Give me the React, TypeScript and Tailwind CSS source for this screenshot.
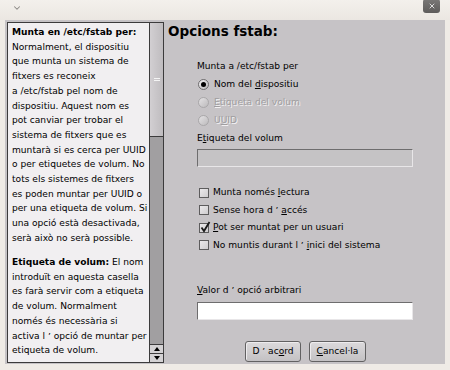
import { ChevronDown, X } from 'lucide-react';

const helpLines: { text: React.ReactNode; gap?: boolean }[] = [
  { text: <b>Munta en /etc/fstab per:</b> },
  { text: 'Normalment, el dispositiu' },
  { text: 'que munta un sistema de' },
  { text: 'fitxers es reconeix' },
  { text: 'a /etc/fstab pel nom de' },
  { text: 'dispositiu. Aquest nom es' },
  { text: 'pot canviar per trobar el' },
  { text: 'sistema de fitxers que es' },
  { text: 'muntarà si es cerca per UUID' },
  { text: 'o per etiquetes de volum. No' },
  { text: 'tots els sistemes de fitxers' },
  { text: 'es poden muntar per UUID o' },
  { text: 'per una etiqueta de volum. Si' },
  { text: 'una opció està desactivada,' },
  { text: 'serà això no serà possible.' },
  { text: <><b>Etiqueta de volum:</b> El nom</>, gap: true },
  { text: 'introduït en aquesta casella' },
  { text: 'es farà servir com a etiqueta' },
  { text: 'de volum. Normalment' },
  { text: 'només és necessària si' },
  { text: 'activa l ʼ opció de muntar per' },
  { text: 'etiqueta de volum.' },
];

function Radio({ checked, disabled, children }: { checked?: boolean; disabled?: boolean; children: React.ReactNode }) {
  return (
    <div className="h-[18px] flex items-center pl-[34px]">
      <span
        className={`w-[11px] h-[11px] rounded-full border flex items-center justify-center ${
          disabled
            ? 'border-[#a9a7a9] bg-gradient-to-br from-[#e4e2e4] to-[#bdbbbd]'
            : 'border-[#6f6d6f] bg-gradient-to-br from-[#f4f3f4] to-[#b9b7b9]'
        }`}
      >
        {checked && <span className="w-[5px] h-[5px] rounded-full bg-black" />}
      </span>
      <span
        className={`ml-[5px] ${disabled ? 'text-[#a09ea0] [text-shadow:1px_1px_0_#f2f0f2]' : 'text-black'}`}
      >
        {children}
      </span>
    </div>
  );
}

function Check({ checked, children }: { checked?: boolean; children: React.ReactNode }) {
  return (
    <div className="h-[17.5px] flex items-center pl-[35px]">
      <span className="relative w-[10px] h-[10px] border border-[#5d5c5d] bg-gradient-to-br from-[#ebe9eb] to-[#cfcdcf]">
        {checked && (
          <svg className="absolute left-[0px] top-[-3px]" width="11" height="12" viewBox="0 0 11 12">
            <path d="M1.5 6.5 L4 10 L9.5 1" fill="none" stroke="#1a1a1a" strokeWidth="1.8" />
          </svg>
        )}
      </span>
      <span className="ml-[4px]">{children}</span>
    </div>
  );
}

function Button({ children, w }: { children: React.ReactNode; w: string }) {
  return (
    <div className={`${w} h-[21px] rounded-[3px] border border-[#626162] bg-gradient-to-b from-[#dcdadc] to-[#c3c1c3] flex items-center justify-center shadow-[inset_1px_1px_0_#eeecee]`}>
      {children}
    </div>
  );
}

export default function App() {
  return (
    <div className="w-[450px] h-[370px] bg-[#efebe6] flex flex-col overflow-hidden text-black text-[9.1px] leading-[14.7px] font-['DejaVu_Sans',sans-serif]">
      {/* Title bar */}
      <div className="h-[20px] flex items-start justify-between bg-gradient-to-b from-[#f3f0ec] to-[#ebe7e2]">
        <ChevronDown className="w-[10px] h-[10px] text-[#8a8784] ml-[12px] mt-[3px]" strokeWidth={2.5} />
        <div className="w-[17px] h-[14px] mr-[10px] -mt-[1px] rounded-[3px] bg-gradient-to-b from-[#7a7877] to-[#5e5c5b] flex items-center justify-center">
          <X className="w-[8px] h-[8px] text-[#dcdcdc]" strokeWidth={3} />
        </div>
      </div>

      {/* Body */}
      <div className="mx-[5px] h-[344px] bg-[#c6c3c6] flex">
        {/* Help panel */}
        <div className="ml-[2px] mt-[2px] w-[157px] h-[341px] border border-[#3c3b3c] flex">
          <div className="w-[141px] bg-[#f1eff1] pl-[4px] pt-[2px] whitespace-nowrap">
            {helpLines.map((l, i) => (
              <div key={i} className={l.gap ? 'mt-[9.5px]' : ''}>
                {l.text}
              </div>
            ))}
          </div>
          <div className="w-[14px] border-l border-[#3c3b3c] flex flex-col">
            <div className="h-[114px] bg-gradient-to-r from-[#d2cfd2] to-[#bfbcbf] border-b border-[#3c3b3c] flex items-center justify-center">
              <div className="w-[6px] flex flex-col gap-[1px]">
                <div className="h-[1px] bg-[#f4f4f4]" />
                <div className="h-[1px] bg-[#f4f4f4]" />
              </div>
            </div>
            <div className="flex-1 bg-[#a19fa1]" />
            <div className="h-[9px] border-t border-[#3c3b3c] bg-[#d4d2d4] flex items-center justify-center">
              <div className="w-0 h-0 border-l-[3px] border-r-[3px] border-b-[4px] border-l-transparent border-r-transparent border-b-black" />
            </div>
            <div className="h-[9px] border-t border-[#3c3b3c] bg-[#d4d2d4] flex items-center justify-center">
              <div className="w-0 h-0 border-l-[3px] border-r-[3px] border-t-[4px] border-l-transparent border-r-transparent border-t-black" />
            </div>
          </div>
        </div>

        {/* Options */}
        <div className="flex-1 flex flex-col pt-[2px]">
          <div className="h-[20px] pl-[4px] flex items-center text-[13.5px] font-bold leading-none">Opcions fstab:</div>
          <div className="mt-[17px] pl-[33px] h-[14px] leading-[14px]">Munta a /etc/fstab per</div>
          <div className="mt-[2px]">
            <Radio checked>
              Nom del <u>d</u>ispositiu
            </Radio>
            <Radio disabled>
              <u>E</u>tiqueta del volum
            </Radio>
            <Radio disabled>
              U<u>U</u>ID
            </Radio>
          </div>
          <div className="mt-[2px] pl-[33px] h-[14px] leading-[14px]">
            E<u>t</u>iqueta del volum
          </div>
          <div className="mt-[4px] ml-[33px] w-[216px] h-[18px] border border-[#6e6d6e] border-b-[#e8e6e8] border-r-[#e8e6e8] bg-[#c5c3c5]" />
          <div className="mt-[17px]">
            <Check>
              Munta només <u>l</u>ectura
            </Check>
            <Check>
              Sense hora d ʼ <u>a</u>ccés
            </Check>
            <Check checked>
              <u>P</u>ot ser muntat per un usuari
            </Check>
            <Check>
              No muntis durant l ʼ <u>i</u>nici del sistema
            </Check>
          </div>
          <div className="mt-[29px] pl-[33px] h-[14px] leading-[14px]">
            <u>V</u>alor d ʼ opció arbitrari
          </div>
          <div className="mt-[5px] ml-[33px] w-[216px] h-[18px] border border-[#6e6d6e] border-b-[#e8e6e8] border-r-[#e8e6e8] bg-white" />
          <div className="mt-[21px] ml-[81px] flex gap-[8px]">
            <Button w="w-[56px]">
              D ʼ ac<u>o</u>rd
            </Button>
            <Button w="w-[57px]">
              <u>C</u>ancel·la
            </Button>
          </div>
        </div>
      </div>
    </div>
  );
}
